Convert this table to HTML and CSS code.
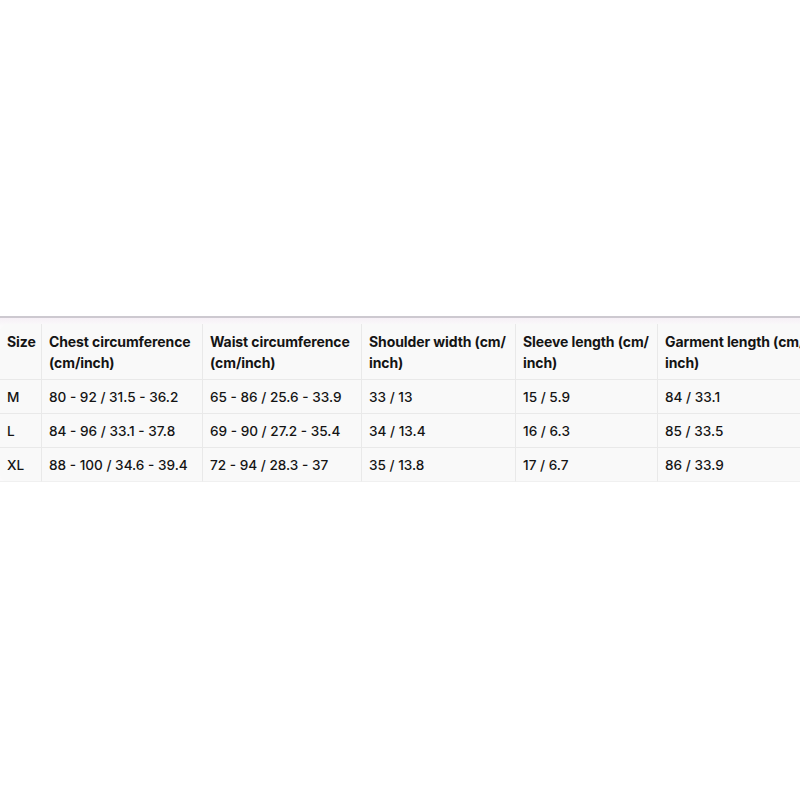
FILE: index.html
```html
<!DOCTYPE html>
<html>
<head>
<meta charset="utf-8">
<link rel="stylesheet" href="styles.css">
</head>
<body>
<div class="page">
  <div class="top"></div>
  <div class="band">
    <table class="sizes">
      <colgroup>
        <col class="c1"><col class="c2"><col class="c3"><col class="c4"><col class="c5"><col class="c6">
      </colgroup>
      <thead>
        <tr>
          <th>Size</th>
          <th>Chest circumference (cm/inch)</th>
          <th>Waist circumference (cm/inch)</th>
          <th>Shoulder width (cm/ inch)</th>
          <th>Sleeve length (cm/ inch)</th>
          <th>Garment length (cm/ inch)</th>
        </tr>
      </thead>
      <tbody>
        <tr><td>M</td><td>80 - 92 / 31.5 - 36.2</td><td>65 - 86 / 25.6 - 33.9</td><td>33 / 13</td><td>15 / 5.9</td><td>84 / 33.1</td></tr>
        <tr><td>L</td><td>84 - 96 / 33.1 - 37.8</td><td>69 - 90 / 27.2 - 35.4</td><td>34 / 13.4</td><td>16 / 6.3</td><td>85 / 33.5</td></tr>
        <tr><td>XL</td><td>88 - 100 / 34.6 - 39.4</td><td>72 - 94 / 28.3 - 37</td><td>35 / 13.8</td><td>17 / 6.7</td><td>86 / 33.9</td></tr>
      </tbody>
    </table>
  </div>
</div>
</body>
</html>
```
FILE: styles.css
```css
html, body {
  margin: 0;
  padding: 0;
  background: #ffffff;
  overflow: hidden;
}
.page {
  width: 800px;
  height: 800px;
  overflow: hidden;
  background: #ffffff;
  font-family: "Inter", "Liberation Sans", Arial, sans-serif;
  color: #141414;
}
.top {
  height: 316px;
  border-bottom: 2px solid #cdc9d0;
}
.band {
  background: linear-gradient(#f6f0f6, #fbfafb 8px);
  padding-top: 6px;
  width: 830px;
}
.sizes {
  table-layout: fixed;
  width: 830px;
  border-collapse: separate;
  border-spacing: 0;
  background: #f9f9f9;
  border-radius: 8px;
}
.c1 { width: 41px; }
.c2 { width: 161px; }
.c3 { width: 159px; }
.c4 { width: 154px; }
.c5 { width: 142px; }
.c6 { width: 173px; }
.sizes th, .sizes td {
  text-align: left;
  padding: 0 4px 0 7px;
  border-left: 1px solid #e9e9e9;
  border-bottom: 1px solid #e9e9e9;
}
.sizes th:first-child, .sizes td:first-child {
  border-left: none;
}
.sizes th {
  font-size: 14px;
  font-weight: 700;
  vertical-align: top;
  padding-top: 7px;
  height: 48px;
  line-height: 21px;
  letter-spacing: -0.1px;
}
.sizes td {
  font-size: 13.6px;
  font-weight: 500;
  vertical-align: middle;
  height: 33px;
}
.sizes tbody tr:last-child td {
  border-bottom: 1px solid #f0f0f0;
}
```
